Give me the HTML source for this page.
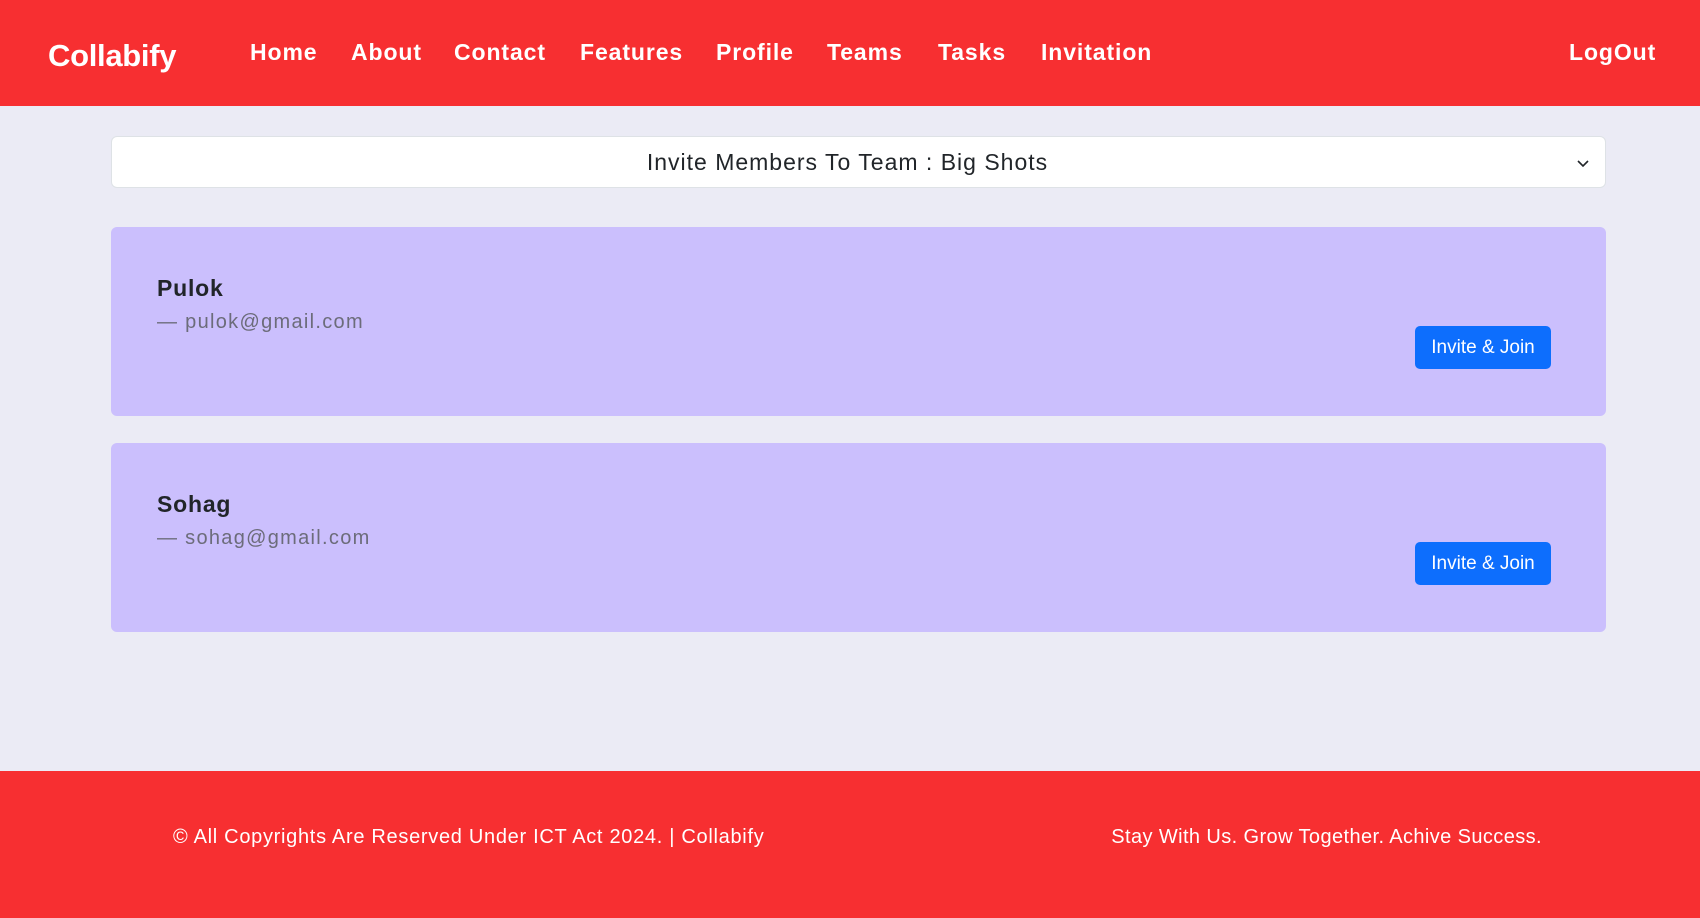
<!DOCTYPE html>
<html><head><meta charset="utf-8"><style>
*{margin:0;padding:0;box-sizing:border-box}
body{width:1700px;height:918px;background:#ebebf5;font-family:"Liberation Sans",sans-serif;position:relative;overflow:hidden}
.nav{position:absolute;left:0;top:0;width:1700px;height:106px;background:#f72f31;color:#fff}
.logo{position:absolute;left:48px;top:38px;font-size:31px;font-weight:bold;letter-spacing:-0.3px}
.nav a{position:absolute;top:39px;font-size:23px;font-weight:bold;letter-spacing:0.9px;color:#fff}
.acc{position:absolute;left:111px;top:136px;width:1495px;height:52px;background:#fff;border:1px solid #dee2e6;border-radius:6px;text-align:center;line-height:50px;font-size:23px;color:#212529;letter-spacing:1px;padding-right:22px}
.acc svg{position:absolute;right:14px;top:18px}
.card{position:absolute;left:111px;width:1495px;height:189px;background:#cbbffd;border-radius:6px}
.name{position:absolute;left:46px;top:48px;font-size:23px;font-weight:bold;color:#212529;letter-spacing:0.8px}
.mail{position:absolute;left:46px;top:84px;font-size:20px;color:#6c6c7a;letter-spacing:1.3px}
.btn{position:absolute;left:1304px;top:99px;width:136px;height:43px;background:#0d6efd;color:#fff;border-radius:5px;font-size:19px;text-align:center;line-height:43px}
.foot{position:absolute;left:0;top:771px;width:1700px;height:147px;background:#f72f31;color:#fff;font-size:20px;letter-spacing:0.7px}
</style></head><body>
<div class="nav">
<div class="logo">Collabify</div>
<a style="left:250px">Home</a><a style="left:351px">About</a><a style="left:454px">Contact</a><a style="left:580px">Features</a><a style="left:716px">Profile</a><a style="left:827px">Teams</a><a style="left:938px">Tasks</a><a style="left:1041px">Invitation</a>
<a style="left:1569px">LogOut</a>
</div>
<div class="acc">Invite Members To Team : Big Shots<svg width="16" height="16" viewBox="0 0 16 16"><path d="M3 6l5 5 5-5" fill="none" stroke="#212529" stroke-width="1.6"/></svg></div>
<div class="card" style="top:227px"><div class="name">Pulok</div><div class="mail">— pulok@gmail.com</div><div class="btn">Invite &amp; Join</div></div>
<div class="card" style="top:443px"><div class="name">Sohag</div><div class="mail">— sohag@gmail.com</div><div class="btn">Invite &amp; Join</div></div>
<div class="foot">
<div style="position:absolute;left:173px;top:55px">© All Copyrights Are Reserved Under ICT Act 2024. | Collabify</div>
<div style="position:absolute;right:158px;top:55px;letter-spacing:0.4px">Stay With Us. Grow Together. Achive Success.</div>
</div>
</body></html>
